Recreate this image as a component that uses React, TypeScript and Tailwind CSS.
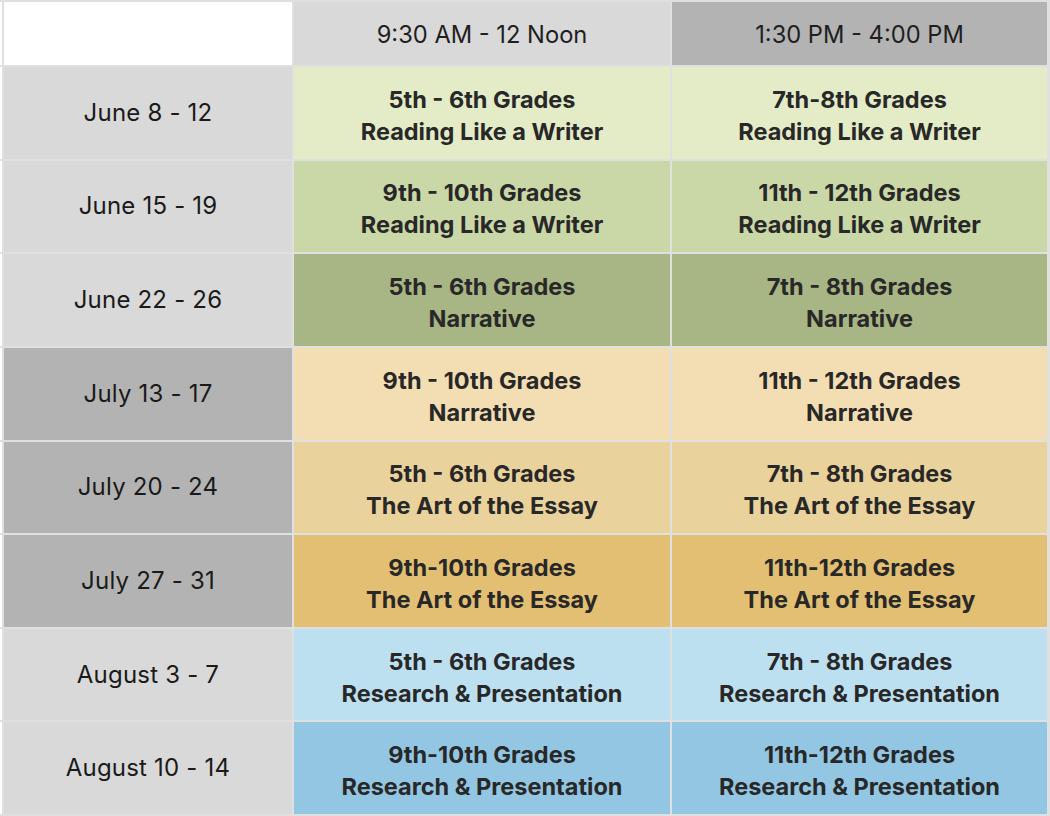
const rows = [
  { date: "June 8 - 12", dateBg: "bg-[#d9d9d9]", bg: "bg-[#e3ebc7]", a: ["5th - 6th Grades", "Reading Like a Writer"], b: ["7th-8th Grades", "Reading Like a Writer"] },
  { date: "June 15 - 19", dateBg: "bg-[#d9d9d9]", bg: "bg-[#cad7a7]", a: ["9th - 10th Grades", "Reading Like a Writer"], b: ["11th - 12th Grades", "Reading Like a Writer"] },
  { date: "June 22 - 26", dateBg: "bg-[#d9d9d9]", bg: "bg-[#a8b584]", a: ["5th - 6th Grades", "Narrative"], b: ["7th - 8th Grades", "Narrative"] },
  { date: "July 13 - 17", dateBg: "bg-[#b3b3b3]", bg: "bg-[#f3deb3]", a: ["9th - 10th Grades", "Narrative"], b: ["11th - 12th Grades", "Narrative"] },
  { date: "July 20 - 24", dateBg: "bg-[#b3b3b3]", bg: "bg-[#e9d29c]", a: ["5th - 6th Grades", "The Art of the Essay"], b: ["7th - 8th Grades", "The Art of the Essay"] },
  { date: "July 27 - 31", dateBg: "bg-[#b3b3b3]", bg: "bg-[#e3bf73]", a: ["9th-10th Grades", "The Art of the Essay"], b: ["11th-12th Grades", "The Art of the Essay"] },
  { date: "August 3 - 7", dateBg: "bg-[#d9d9d9]", bg: "bg-[#bde0f1]", a: ["5th - 6th Grades", "Research & Presentation"], b: ["7th - 8th Grades", "Research & Presentation"] },
  { date: "August 10 - 14", dateBg: "bg-[#d9d9d9]", bg: "bg-[#93c6e2]", a: ["9th-10th Grades", "Research & Presentation"], b: ["11th-12th Grades", "Research & Presentation"] },
];

function Course({ lines, bg }: { lines: string[]; bg: string }) {
  return (
    <div className={`${bg} flex flex-col items-center justify-center pt-[6px] text-[23.5px] leading-[32px] font-bold text-[#282828]`}>
      <span>{lines[0]}</span>
      <span>{lines[1]}</span>
    </div>
  );
}

export default function App() {
  return (
    <div
      className="w-[1050px] h-[816px] bg-[#e0e0e0] pt-[2px] pb-[2px] pr-[3px] grid grid-cols-[2px_288px_376px_375px] grid-rows-[63px_repeat(8,1fr)] gap-[2px]"
      style={{ fontFamily: "Inter, 'Liberation Sans', sans-serif" }}
    >
      <div className="bg-white" />
      <div className="bg-white" />
      <div className="bg-[#d9d9d9] flex items-center justify-center pt-[2px] text-[23.7px] text-[#1f1f1f]">9:30 AM - 12 Noon</div>
      <div className="bg-[#b3b3b3] flex items-center justify-center pt-[2px] text-[23.7px] text-[#1f1f1f]">1:30 PM - 4:00 PM</div>
      {rows.map((r) => (
        <div key={r.date} className="contents">
          <div className="bg-white" />
          <div className={`${r.dateBg} flex items-center justify-center text-[24px] tracking-[0.2px] text-[#1a1a1a]`}>{r.date}</div>
          <Course lines={r.a} bg={r.bg} />
          <Course lines={r.b} bg={r.bg} />
        </div>
      ))}
    </div>
  );
}
